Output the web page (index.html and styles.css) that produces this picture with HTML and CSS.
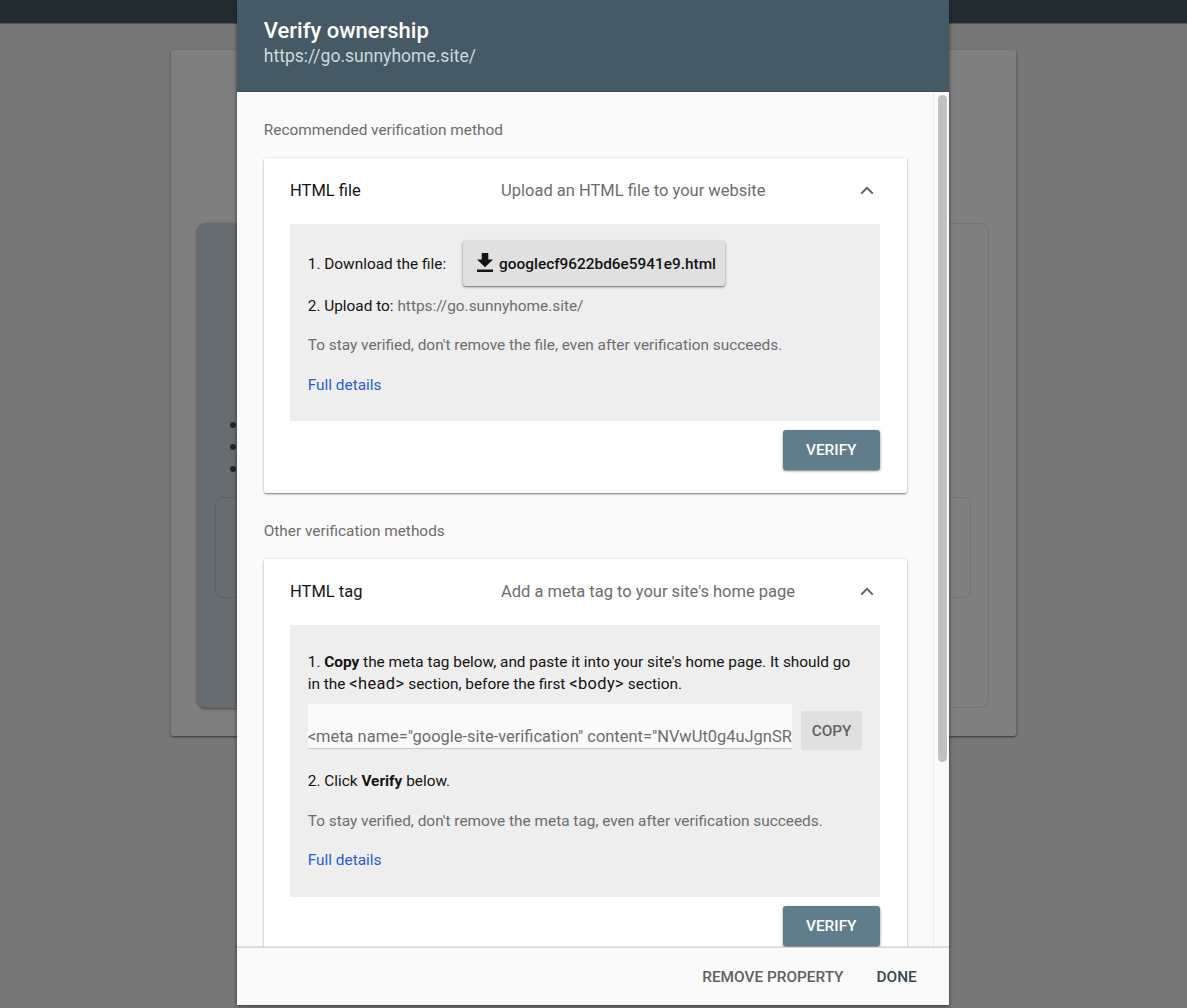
FILE: index.html
```html
<!DOCTYPE html>
<html lang="en">
<head>
<meta charset="utf-8">
<title>Verify ownership</title>
<link rel="stylesheet" href="styles.css">
</head>
<body>
<div class="page">
  <div class="topbar"></div>
  <div class="welcome">
    <div class="option option-domain">
      <ul class="bullets"><li></li><li></li><li></li></ul>
      <div class="option-input"></div>
    </div>
    <div class="option option-prefix"><div class="option-input"></div></div>
  </div>
</div>
<div class="overlay">
  <section class="dialog" role="dialog" aria-labelledby="title">
    <header class="dialog-header">
      <h1 id="title" class="title"><span>Verify ownership</span></h1>
      <p class="subtitle"><span>https://go.sunnyhome.site/</span></p>
    </header>
    <div class="dialog-body">
      <div class="methods">
        <h2 class="group-title"><span>Recommended verification method</span></h2>
        <article class="card">
          <div class="card-head">
            <span class="method-name">HTML file</span>
            <span class="method-desc">Upload an HTML file to your website</span>
            <svg class="chevron" viewBox="0 0 14 9"><path d="M1.2 7.6 7 1.8l5.8 5.8"/></svg>
          </div>
          <div class="panel">
            <div class="download-row">
              <span>1. Download the file:</span>
              <button class="file-button">
                <svg class="download" viewBox="0 0 16 19"><path d="M4.7 0h6.6v6.5H16L8 14.3 0 6.5h4.7zM0 16.6h16V19H0z"/></svg>
                <span>googlecf9622bd6e5941e9.html</span>
              </button>
            </div>
            <p class="line upload"><span>2. Upload to: <span class="muted">https://go.sunnyhome.site/</span></span></p>
            <p class="line muted"><span>To stay verified, don't remove the file, even after verification succeeds.</span></p>
            <p class="line"><a class="link">Full details</a></p>
          </div>
          <div class="card-actions"><button class="verify">VERIFY</button></div>
        </article>
        <h2 class="group-title other"><span>Other verification methods</span></h2>
        <article class="card">
          <div class="card-head">
            <span class="method-name">HTML tag</span>
            <span class="method-desc">Add a meta tag to your site's home page</span>
            <svg class="chevron" viewBox="0 0 14 9"><path d="M1.2 7.6 7 1.8l5.8 5.8"/></svg>
          </div>
          <div class="panel panel-tag">
            <p class="copy-step"><span>1. <b>Copy</b> the meta tag below, and paste it into your site's home page. It should go</span><br><span>in the <span class="code">&lt;head&gt;</span> section, before the first <span class="code">&lt;body&gt;</span> section.</span></p>
            <div class="meta-row">
              <div class="meta-field"><span>&lt;meta name="google-site-verification" content="NVwUt0g4uJgnSR</span></div>
              <button class="copy">COPY</button>
            </div>
            <p class="line click-step"><span>2. Click <b>Verify</b> below.</span></p>
            <p class="line muted"><span>To stay verified, don't remove the meta tag, even after verification succeeds.</span></p>
            <p class="line"><a class="link">Full details</a></p>
          </div>
          <div class="card-actions"><button class="verify">VERIFY</button></div>
        </article>
      </div>
      <div class="scrollbar"><div class="thumb"></div></div>
    </div>
    <footer class="dialog-footer">
      <button class="text-button">REMOVE PROPERTY</button>
      <button class="text-button done">DONE</button>
    </footer>
  </section>
</div>
</body>
</html>
```
FILE: styles.css
```css
* { box-sizing: border-box; }
html, body { height: 100%; margin: 0; overflow: hidden; }
body { font-family: Roboto, "Liberation Sans", sans-serif; font-size: 15.38px; color: #141414; }
h1, h2, p, ul { margin: 0; padding: 0; font-weight: 400; }
button { border: 0; padding: 0; margin: 0; font: inherit; color: inherit; }
b { font-weight: 700; }

.page { height: 1008px; background: #777; }
.topbar { height: 24px; background: #232d31; border-bottom: 1px solid #4f5354; }
.welcome {
  display: flex; justify-content: space-between;
  width: 845px; height: 686px; margin: 26px 0 0 171px; padding: 173px 27px 28px 26px;
  background: #7f7f7f; border-radius: 2px;
  box-shadow: 0 1px 3px rgba(0, 0, 0, .4), 0 1px 1px rgba(0, 0, 0, .2);
}
.option { width: 380px; height: 485px; border-radius: 9px; }
.option-domain { background: #666c6f; padding: 194px 18px 0; box-shadow: 0 1px 3px rgba(0, 0, 0, .45); }
.option-prefix { border: 1px solid #737373; padding: 273px 17px 0; }
.bullets { display: grid; gap: 16px; list-style: none; padding-left: 15px; height: 80px; align-content: start; padding-top: 5px; }
.bullets li { width: 6px; height: 6px; border-radius: 50%; background: #20272a; }
.option-input { height: 101px; border: 1px solid #5b6164; border-radius: 7px; }
.option-prefix .option-input { border-color: #737373; }

.overlay { position: absolute; inset: 0; display: flex; justify-content: center; align-items: flex-start; padding-right: 0.5px; }
.dialog {
  display: flex; flex-direction: column; width: 712px; height: 1005px; background: #fafafa;
  box-shadow: 0 1px 4px rgba(0, 0, 0, .55);
}
.dialog-header { height: 92px; padding: 18px 26px 0 26.5px; background: #455a64; border-bottom: 1px solid #3b505a; }
.title { font-size: 22px; line-height: 26px; font-weight: 500; color: #fff; }
.subtitle { font-size: 17.55px; line-height: 25px; color: #cfd8dc; }

.dialog-body { display: flex; height: 855px; overflow: hidden; }
.methods { width: 696px; flex: none; padding: 26px 26px 0 26.5px; }
.group-title { font-size: 15.38px; line-height: 24px; color: #6d6d6d; }
.group-title.other { margin-top: 26px; }
.card {
  width: 643px; height: 335px; margin-top: 16px; padding: 0 27px 0 26.3px; background: #fff; border-radius: 2px;
  box-shadow: 0 1px 2px rgba(0, 0, 0, .32), 0 2px 2px -1px rgba(0, 0, 0, .22), 0 0 3px rgba(0, 0, 0, .1);
}
.group-title.other + .card { height: 420px; }
.card-head { display: flex; align-items: center; height: 66px; padding-bottom: 1px; font-size: 16.5px; }
.method-name { width: 211px; color: #141414; }
.method-desc { flex: 1; color: #6d6d6d; }
.chevron { width: 14px; height: 9px; margin: 0 6px 0 0; fill: none; stroke: #616161; stroke-width: 2; }
.panel { height: 197px; padding: 16px 17.7px 0; background: #eee; }
.download-row { display: flex; align-items: center; height: 47px; }
.file-button {
  display: flex; align-items: center; gap: 6px; width: 262px; height: 45px; margin-left: 17px; padding-left: 14px;
  background: #e0e0e0; border-radius: 3px; font-weight: 500;
  box-shadow: 0 1px 3px rgba(0, 0, 0, .4), 0 1px 1px rgba(0, 0, 0, .2);
}
.download { width: 16px; height: 19px; margin-bottom: 2px; fill: #141414; }
.line { line-height: 22px; margin-top: 17.5px; }
.line.upload { margin-top: 8px; }
.line.upload + .line { margin-top: 17px; }
.muted { color: #6d6d6d; }
.link { color: #2a5bd7; }
.card-actions { display: flex; justify-content: flex-end; padding-top: 9px; }
.verify {
  width: 97px; height: 40px; border-radius: 3px; background: #607d8b; color: #fff; font-weight: 500;
  box-shadow: 0 1px 3px rgba(0, 0, 0, .4), 0 1px 1px rgba(0, 0, 0, .2);
}

.panel-tag { height: 272px; padding-top: 26px; }
.copy-step { line-height: 22px; white-space: nowrap; }
.code { font-size: 16.4px; line-height: 1; letter-spacing: .4px; }
.meta-row { display: flex; gap: 9px; height: 45px; margin-top: 9px; align-items: flex-start; }
.meta-field {
  width: 485px; height: 45px; padding-top: 22px; overflow: hidden; white-space: nowrap;
  background: #fafafa; border-bottom: 1px solid #c6c6c6; color: #6d6d6d; font-size: 16.45px; line-height: 22px;
}
.copy { width: 61px; height: 39px; margin-top: 7px; border-radius: 2px; background: #e0e0e0; color: #616161; font-weight: 500; }
.line.click-step { margin-top: 21px; }

.scrollbar { flex: 1; padding: 3px 3px 0 4px; background: #fafafa; border-left: 1px solid #ebebeb; }
.thumb { width: 9px; height: 667px; border-radius: 5px; background: #c1c1c1; }

.dialog-footer {
  display: flex; justify-content: flex-end; align-items: center; gap: 33px; flex: 1; padding-right: 32.5px;
  background: #fafafa; border-top: 1px solid #d6d6d6; box-shadow: 0 -1px 1px rgba(0, 0, 0, .08);
}
.text-button { background: none; color: #616161; font-weight: 500; }
.done { color: #37474f; }
```
